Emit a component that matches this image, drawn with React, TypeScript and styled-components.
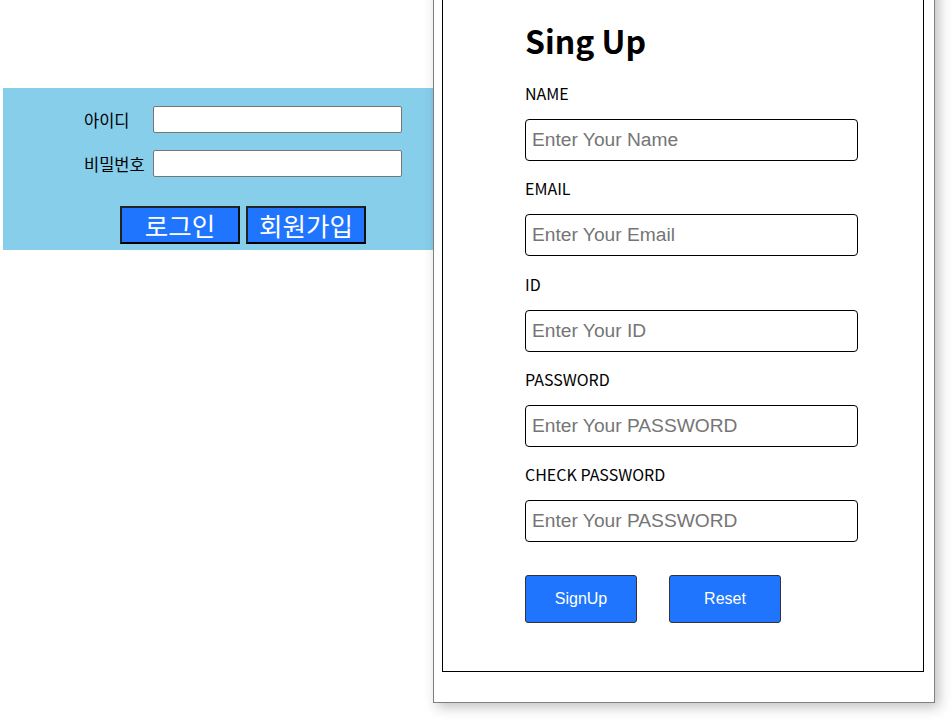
import React from "react";
import styled, { createGlobalStyle } from "styled-components";

const Global = createGlobalStyle`
  html, body { margin: 0; padding: 0; background: #fff; }
  body { width: 952px; height: 720px; overflow: hidden; position: relative; font-family: "Noto Sans CJK KR", "Noto Sans", sans-serif; }
`;

const Page = styled.div`
  position: relative;
  width: 952px;
  height: 720px;
  padding-top: 88px;
  padding-left: 3px;
  box-sizing: border-box;
`;

const LoginPanel = styled.div`
  width: 450px;
  height: 162px;
  background: #87ceeb;
  box-sizing: border-box;
  padding: 18px 0 0 81px;
  display: flex;
  flex-direction: column;
`;

const FieldGrid = styled.div`
  display: grid;
  grid-template-columns: 69px 249px;
  row-gap: 17px;
  align-items: center;
`;

const LoginLabel = styled.label`
  font-family: "Noto Sans CJK KR", sans-serif;
  font-size: 16.5px;
  color: #000;
  line-height: 20px;
  white-space: nowrap;
`;

const LoginInput = styled.input`
  width: 249px;
  height: 27px;
  box-sizing: border-box;
  border: 1px solid #767676;
  border-radius: 2px;
  background: #fff;
  padding: 0 4px;
  outline: none;
`;

const LoginButtons = styled.div`
  display: flex;
  gap: 6px;
  margin-top: 29px;
  padding-left: 36px;
`;

const LoginButton = styled.button`
  width: 120px;
  height: 38px;
  box-sizing: border-box;
  background: #1f75fe;
  color: #fff;
  border: 2px solid #222;
  border-right-color: #111;
  border-bottom-color: #000;
  font-family: "Noto Sans CJK KR", sans-serif;
  font-size: 25.5px;
  line-height: 1;
  padding: 0;
`;

const Card = styled.div`
  position: absolute;
  left: 433px;
  top: -20px;
  width: 502px;
  height: 723px;
  box-sizing: border-box;
  background: #fff;
  border: 1px solid #808080;
  box-shadow: 4px 4px 12px rgba(0, 0, 0, 0.25);
  padding: 0 10px 30px 8px;
  display: flex;
`;

const Inner = styled.div`
  flex: 1;
  border: 1px solid #000;
  box-sizing: border-box;
  padding: 36px 0 0 82px;
  display: flex;
  flex-direction: column;
`;

const Title = styled.h1`
  margin: 0;
  font-family: "Noto Sans CJK KR", "Noto Sans", sans-serif;
  font-weight: 700;
  font-size: 32px;
  line-height: 44px;
  color: #000;
`;

const Form = styled.div`
  display: flex;
  flex-direction: column;
  margin-top: 20px;
`;

const Field = styled.div`
  display: flex;
  flex-direction: column;
  height: 95.3px;
`;

const FieldLabel = styled.label`
  font-family: "Noto Sans CJK KR", "Noto Sans", sans-serif;
  font-size: 16px;
  line-height: 22px;
  color: #000;
  margin-bottom: 15px;
`;

const FieldInput = styled.input`
  width: 333px;
  height: 42px;
  box-sizing: border-box;
  border: 1px solid #000;
  border-radius: 4px;
  padding: 0 6px;
  font-family: "Liberation Sans", Arial, sans-serif;
  font-size: 19.2px;
  outline: none;
  &::placeholder { color: #757575; }
`;

const ButtonRow = styled.div`
  display: flex;
  gap: 32px;
  margin-top: 17px;
`;

const ActionButton = styled.button`
  width: 112px;
  height: 48px;
  box-sizing: border-box;
  background: #1f75fe;
  color: #fff;
  border: 1px solid #333;
  border-radius: 3px;
  font-family: "Liberation Sans", Arial, sans-serif;
  font-size: 16px;
  padding: 0;
`;

const fields = [
  { label: "NAME", ph: "Enter Your Name", type: "text" },
  { label: "EMAIL", ph: "Enter Your Email", type: "text" },
  { label: "ID", ph: "Enter Your ID", type: "text" },
  { label: "PASSWORD", ph: "Enter Your PASSWORD", type: "password" },
  { label: "CHECK PASSWORD", ph: "Enter Your PASSWORD", type: "password" },
];

export default function App() {
  return (
    <Page>
      <Global />
      <LoginPanel>
        <FieldGrid>
          <LoginLabel>아이디</LoginLabel>
          <LoginInput type="text" />
          <LoginLabel>비밀번호</LoginLabel>
          <LoginInput type="password" />
        </FieldGrid>
        <LoginButtons>
          <LoginButton>로그인</LoginButton>
          <LoginButton>회원가입</LoginButton>
        </LoginButtons>
      </LoginPanel>
      <Card>
        <Inner>
          <Title>Sing Up</Title>
          <Form>
            {fields.map((f, i) => (
              <Field key={i}>
                <FieldLabel>{f.label}</FieldLabel>
                <FieldInput type={f.type} placeholder={f.ph} />
              </Field>
            ))}
            <ButtonRow>
              <ActionButton>SignUp</ActionButton>
              <ActionButton>Reset</ActionButton>
            </ButtonRow>
          </Form>
        </Inner>
      </Card>
    </Page>
  );
}
